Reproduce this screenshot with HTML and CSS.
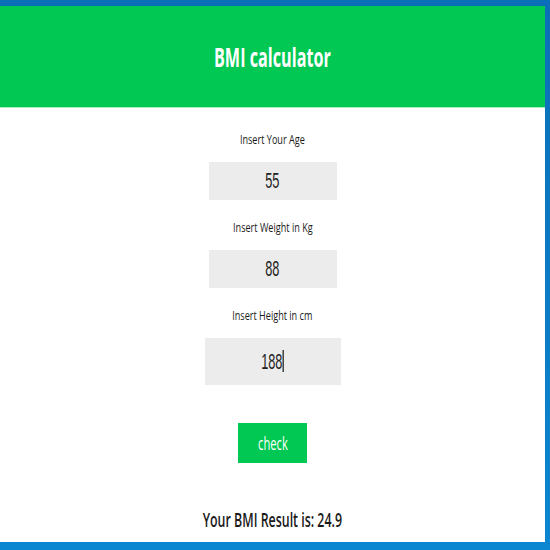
FILE: index.html
```html
<!DOCTYPE html>
<html lang="en">
<head>
<meta charset="utf-8">
<title>BMI calculator</title>
<link rel="stylesheet" href="styles.css">
</head>
<body>
<div class="app">
  <header class="header"><span class="squish title">BMI calculator</span></header>
  <main class="content">
    <div class="field">
      <div class="label"><span class="squish">Insert Your Age</span></div>
      <div class="input"><span class="squish">55</span></div>
    </div>
    <div class="field">
      <div class="label"><span class="squish">Insert Weight in Kg</span></div>
      <div class="input"><span class="squish">88</span></div>
    </div>
    <div class="field">
      <div class="label"><span class="squish">Insert Height in cm</span></div>
      <div class="input focused"><span class="squish">188<span class="caret"></span></span></div>
    </div>
    <button class="check" type="button"><span class="squish">check</span></button>
    <div class="result"><span class="squish">Your BMI Result is: 24.9</span></div>
  </main>
</div>
</body>
</html>
```
FILE: styles.css
```css
html, body {
  margin: 0;
  padding: 0;
}
body {
  background: linear-gradient(#0a6fb8, #0b86d0);
  height: 550px;
  overflow: hidden;
  font-family: "Open Sans", "Liberation Sans", sans-serif;
}
.app {
  margin: 6px 5px 0 0;
  height: 536px;
  background: #ffffff;
  display: flex;
  flex-direction: column;
}
.squish {
  display: inline-block;
  transform: scaleX(0.62);
  transform-origin: center;
  white-space: nowrap;
}
.header {
  height: 101px;
  background: #00c853;
  border-bottom: 1px solid #a8ecc4;
  display: flex;
  align-items: center;
  justify-content: center;
}
.title {
  color: #ffffff;
  font-weight: 700;
  font-size: 27px;
  line-height: 32px;
  transform: scaleX(0.6);
}
.content {
  display: flex;
  flex-direction: column;
  align-items: center;
  padding-top: 23px;
}
.field {
  display: flex;
  flex-direction: column;
  align-items: center;
}
.field + .field {
  margin-top: 19px;
}
.label {
  font-size: 13px;
  line-height: 16px;
  color: #1a1a1a;
  height: 16px;
  margin-bottom: 15px;
}
.label .squish {
  transform: scaleX(0.7);
}
.input {
  width: 128px;
  height: 38px;
  background: #ececec;
  display: flex;
  align-items: center;
  justify-content: center;
  font-family: "Liberation Sans", Arial, sans-serif;
  font-size: 22px;
  color: #222222;
}
.input .squish {
  transform: scaleX(0.58);
}
.input.focused {
  width: 136px;
  height: 47px;
}
.caret {
  display: inline-block;
  width: 2px;
  height: 22px;
  background: #111111;
  vertical-align: middle;
  margin-top: -3px;
}
.check {
  margin-top: 38px;
  width: 69px;
  height: 40px;
  border: none;
  background: #00c853;
  color: #ffffff;
  font-family: "Open Sans", "Liberation Sans", sans-serif;
  font-size: 18px;
  padding: 0;
  display: flex;
  align-items: center;
  justify-content: center;
}
.result {
  margin-top: 45px;
  font-size: 20px;
  line-height: 24px;
  font-weight: 600;
  color: #1a1a1a;
}
```
